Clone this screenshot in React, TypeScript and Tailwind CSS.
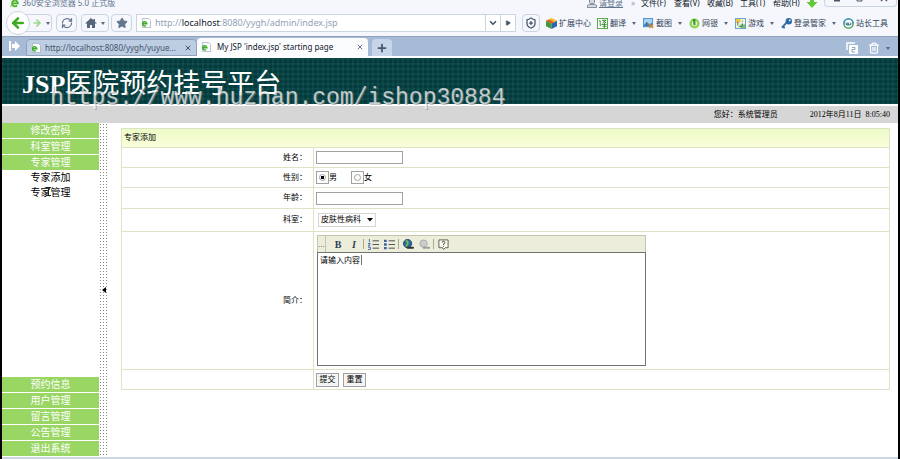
import { useState, type ReactNode } from "react";
import {
  ArrowLeft,
  ArrowRight,
  ChevronDown,
  Play,
  Plus,
  RefreshCw,
  ShieldPlus,
  Star,
  Trash2,
  X,
} from "lucide-react";

const MENUS = ["文件(F)", "查看(V)", "收藏(B)", "工具(T)", "帮助(H)"];
const TOP_MENU = ["修改密码", "科室管理", "专家管理"];
const SUB_MENU = ["专家添加", "专家管理"];
const BOTTOM_MENU = ["预约信息", "用户管理", "留言管理", "公告管理", "退出系统"];

export default function App() {
  return (
    <div className="flex min-h-screen flex-col overflow-hidden border-x-2 border-black bg-white font-['Liberation_Sans','Noto_Sans_CJK_SC',sans-serif] text-[8px] text-black">
      <BrowserChrome />
      <PageHeader />
      <div className="flex flex-1">
        <Sidebar />
        <main className="flex-1 pt-1 pr-2 pl-3">
          <ExpertForm />
        </main>
      </div>
      <div className="h-0.5 bg-slate-300" />
    </div>
  );
}

function BrowserChrome() {
  return (
    <header className="bg-[#f5f7fc] font-['Noto_Sans','Noto_Sans_CJK_SC',sans-serif]">
      <div className="flex h-1.5 items-center pl-2 text-slate-700">
        <BrowserMark />
        <span className="ml-0.5 text-[8px] whitespace-nowrap text-slate-500">
          360安全浏览器 5.0 正式版
        </span>
        <div className="ml-auto flex items-center whitespace-nowrap">
          <svg viewBox="0 0 12 12" className="mr-0.5 size-2.5" fill="#d5d9df" stroke="#6b7685">
            <path d="M3 .5h6v5L7.500 7h-3L3 5.500zM.5 11.500V9l3-1.500h5l3 1.500v2.500z" />
          </svg>
          <a href="#login" className="w-8 text-slate-500 underline">
            请登录
          </a>
          <span className="w-2.5 text-slate-400">»</span>
          {MENUS.map((m) => (
            <button key={m} className="w-[33px] text-left text-slate-900">
              {m}
            </button>
          ))}
          <svg viewBox="0 0 12 12" className="mr-1.5 size-3">
            <path d="M4 1h4v4h3.500L6 11 .5 5H4z" fill="#62c83c" />
          </svg>
        </div>
        <div className="-mt-1 mr-px flex h-3 w-[73px] items-end justify-around rounded-b border border-t-0 border-slate-300 pb-1">
          <svg viewBox="0 0 8 8" className="size-2" stroke="#4b5568" fill="none">
            <path d="M1 6.500h6" strokeWidth="2" />
          </svg>
          <svg viewBox="0 0 8 8" className="size-2" stroke="#4b5568" fill="none">
            <path d="M1 3h5v4H1zM3 3V1h5v4H6" />
          </svg>
          <svg viewBox="0 0 8 8" className="size-2" stroke="#4b5568" fill="none">
            <path d="m1 1 6 6M7 1 1 7" strokeWidth="1.400" />
          </svg>
        </div>
      </div>

      <div className="flex h-[30px] items-center pt-1 pr-2.5 pl-1">
        <button
          aria-label="后退"
          className="z-10 flex size-6 items-center justify-center rounded-full border border-slate-300 bg-white"
        >
          <ArrowLeft className="size-4 text-[#3dab22]" strokeWidth={4} />
        </button>
        <button
          aria-label="前进"
          className="-ml-2 flex h-[18px] w-[30px] items-center justify-center gap-1 rounded-r border border-slate-300 pl-2"
        >
          <ArrowRight className="size-2.5 shrink-0 text-[#9bd88c]" strokeWidth={4} />
          <Caret />
        </button>
        <ToolButton label="刷新" className="ml-1 w-[21px]">
          <RefreshCw className="size-3 text-slate-500" strokeWidth={2.5} />
        </ToolButton>
        <ToolButton label="主页" className="ml-1 w-7 gap-1">
          <svg viewBox="0 0 12 12" className="size-3" fill="#56657a">
            <path d="M6 1 0 6.500h2V11h3V8h2v3h3V6.500h2L10 4.700V2H8.500v1.300z" />
          </svg>
          <Caret />
        </ToolButton>
        <ToolButton label="收藏" className="ml-0.5 w-[21px]">
          <Star className="size-3 fill-slate-500 text-slate-500" />
        </ToolButton>
        <form
          className="ml-1 flex h-[18px] flex-1 items-center border border-slate-300 bg-white pl-1"
          onSubmit={(e) => e.preventDefault()}
        >
          <PageMark />
          <span className="ml-1 flex-1 text-[9px] whitespace-nowrap text-slate-400">
            http://<span className="text-slate-900">localhost</span>
            :8080/yygh/admin/index.jsp
          </span>
          <button
            aria-label="历史"
            className="flex h-full w-[15px] items-center justify-center border-l border-slate-300"
          >
            <ChevronDown className="size-2.5 text-slate-600" strokeWidth={4} />
          </button>
          <button
            aria-label="转到"
            className="flex h-full w-[15px] items-center justify-center border-l border-slate-300"
          >
            <Play className="size-1.5 fill-slate-600 text-slate-600" />
          </button>
        </form>
        <ToolButton label="安全" className="ml-1.5 w-[18px]">
          <ShieldPlus className="size-3 text-slate-600" strokeWidth={2.5} />
        </ToolButton>
        <nav className="ml-1.5 flex items-center text-slate-700">
          <Plugin label="扩展中心" className="w-[51px]">
            <path d="m6 0 6 3-6 3-6-3z" fill="#f3bb2b" />
            <path d="m0 3 6 3v6L0 9z" fill="#3e9b3c" />
            <path d="m12 3-6 3v6l6-3z" fill="#2b66ad" />
            <path d="m3 1.500 6 3-3 1.500-6-3z" fill="#d85b27" />
          </Plugin>
          <Plugin label="翻译" className="w-[46px]" menu>
            <rect x=".5" y=".5" width="11" height="11" fill="#fff" stroke="#4aa83c" />
            <path
              d="M2 3h1.500v5.500L5 7M5.500 2.500H10L6 5.500M6.500 2.500 10 5.500M5.500 7H10.500M8 5v6M6 9h4.500"
              stroke="#318a27"
              fill="none"
            />
          </Plugin>
          <Plugin label="截图" className="w-[46px]" menu>
            <rect x=".5" y=".5" width="10" height="9" fill="#a9d3f3" stroke="#4a8fca" />
            <path d="m1 8 3-4 3 3 3-2v4H1z" fill="#3a7bb9" />
            <path d="m6 6 5 5M11 7l-4 4" stroke="#dd8a2c" strokeWidth="1.500" />
          </Plugin>
          <Plugin label="网银" className="w-[46px]" menu>
            <circle cx="6" cy="6" r="5.500" fill="#8fd14b" />
            <circle cx="6" cy="6" r="3" fill="#e8f8d7" />
            <path d="M4 1h3v7H5z" fill="#3c9b31" />
          </Plugin>
          <Plugin label="游戏" className="w-[46px]" menu>
            <rect x=".5" y=".5" width="11" height="11" fill="#eef6d8" stroke="#5c9fcb" />
            <path d="M1 1h5v4H1z" fill="#f2c53d" />
            <path d="M6 7h5v4H6z" fill="#7dc254" />
            <path d="M3 4v4M8 3v1M8 6v2M4 9h4" stroke="#34608c" />
          </Plugin>
          <Plugin label="登录管家" className="w-[62px]" menu>
            <circle cx="8.500" cy="3.500" r="3.500" fill="#2d6aa8" />
            <circle cx="9.500" cy="2.500" r="1" fill="#fff" />
            <path d="m6 5-5 5.500M2 9l2 2" stroke="#2d6aa8" strokeWidth="2" />
          </Plugin>
          <Plugin label="站长工具">
            <circle cx="6" cy="6" r="5" fill="#fff" stroke="#37a04a" strokeWidth="1.500" />
            <path d="M1 6a5 5 0 0 1 10 0" stroke="#3a8fd0" strokeWidth="1.500" fill="none" />
            <path d="M3.500 5v2.500h2V5v2.500h3V5" stroke="#245c86" fill="none" />
          </Plugin>
        </nav>
      </div>

      <div className="flex h-5 items-end border-t border-slate-400 bg-[#a5bbd6]">
        <svg viewBox="0 0 12 12" className="mb-1 ml-1.5 size-3" fill="#fff">
          <path d="M1 1h2v10H1zM4 4h3V1l5 5-5 5V8H4z" />
        </svg>
        <div className="ml-1.5 flex h-[17px] w-[171px] items-center rounded-t border border-slate-400 bg-[#bdcde2] px-1 text-slate-600">
          <PageMark />
          <span className="ml-1 flex-1 text-[8px] whitespace-nowrap">
            http://localhost:8080/yygh/yuyue...
          </span>
          <X className="size-2" strokeWidth={3} />
        </div>
        <div className="flex h-[18px] w-[171px] items-center rounded-t bg-[#fbfcfe] px-1 text-slate-900">
          <PageMark />
          <span className="ml-1.5 flex-1 text-[8px] whitespace-nowrap">
            My JSP 'index.jsp' starting page
          </span>
          <X className="size-2 text-slate-500" strokeWidth={3} />
        </div>
        <button
          aria-label="新标签页"
          className="ml-1 flex h-[17px] w-5 items-center justify-center rounded-t bg-[#c6d5e8]"
        >
          <Plus className="size-3 text-slate-600" strokeWidth={3.5} />
        </button>
        <div className="mr-2 mb-0.5 ml-auto flex items-center gap-2.5 text-white">
          <svg viewBox="0 0 12 12" className="size-3">
            <path d="M1 8V1h8" fill="none" stroke="#fff" strokeWidth="1.500" />
            <rect x="3" y="3" width="9" height="9" rx="1" fill="#fff" />
            <path d="M6 5.500h3v2H6v2.500h3" fill="none" stroke="#8aa4c4" />
          </svg>
          <div className="flex items-center gap-1.5">
            <Trash2 className="size-3" strokeWidth={2.5} />
            <Caret />
          </div>
        </div>
      </div>
      <div className="h-0.5 bg-white" />
    </header>
  );
}

function ToolButton({
  label,
  className,
  children,
}: {
  label: string;
  className: string;
  children: ReactNode;
}) {
  return (
    <button
      aria-label={label}
      className={`flex h-[18px] items-center justify-center rounded-sm border border-slate-300 ${className}`}
    >
      {children}
    </button>
  );
}

function Plugin({
  label,
  className = "",
  menu = false,
  children,
}: {
  label: string;
  className?: string;
  menu?: boolean;
  children: ReactNode;
}) {
  return (
    <button className={`flex items-center whitespace-nowrap ${className}`}>
      <svg viewBox="0 0 12 12" className="mr-0.5 size-[11px] shrink-0">
        {children}
      </svg>
      {label}
      {menu && (
        <span className="ml-1.5">
          <Caret />
        </span>
      )}
    </button>
  );
}

function Caret() {
  return (
    <svg viewBox="0 0 4 3" className="h-[3px] w-1 shrink-0" fill="#5b677a">
      <path d="M0 0h4L2 3z" />
    </svg>
  );
}

function BrowserMark() {
  return (
    <svg viewBox="0 0 12 12" className="size-2.5 shrink-0" fill="none">
      <path d="M2.500 6.500h7A3.500 3.500 0 1 0 8.500 9" stroke="#45b52c" strokeWidth="2.200" />
      <path d="M1 11C0 8 8 0 11 1" stroke="#8bcf3a" strokeWidth="1.200" />
    </svg>
  );
}

function PageMark() {
  return (
    <svg viewBox="0 0 12 12" className="size-2.5 shrink-0" fill="none">
      <path d="M2 .5h7l2.500 2.500v8.500H2z" fill="#fff" stroke="#9fb0bd" />
      <path d="M2 7h5A2.500 2.500 0 1 0 6 9" stroke="#3fae2a" strokeWidth="1.800" />
    </svg>
  );
}

function PageHeader() {
  return (
    <div className="relative">
      <div className="h-[46px] bg-[#033a3b] bg-[linear-gradient(#3c808026_2px,transparent_2px),linear-gradient(90deg,#3c808026_2px,transparent_2px)] bg-[size:5px_5px] pl-5">
        <h1 className="pt-1.5 font-['Liberation_Serif','Noto_Sans_CJK_SC',serif] text-[27px] leading-10 font-normal whitespace-nowrap text-white">
          <b className="text-[26px] font-bold">JSP</b>
          医院预约挂号平台
        </h1>
      </div>
      <div className="mt-0.5 flex h-[17px] items-center justify-end gap-8 bg-[#d6d6d6] pr-2 whitespace-nowrap">
        <span className="text-[8px]">您好：系统管理员</span>
        <span className="font-['Liberation_Serif','Noto_Sans_CJK_SC',serif] text-[8px]">
          2012年8月11日&nbsp; 8:05:40
        </span>
      </div>
      {/* site watermark */}
      <span className="pointer-events-none absolute top-6 left-12 font-['Liberation_Mono',monospace] text-[23px] leading-8 whitespace-nowrap text-white/70 [text-shadow:1px_1px_0_#8888]">
        https://www.huzhan.com/ishop30884
      </span>
    </div>
  );
}

function Sidebar() {
  return (
    <>
      <nav className="flex w-[97px] flex-col text-[10px]">
        <MenuGroup items={TOP_MENU} />
        <div className="relative flex flex-col">
          {SUB_MENU.map((s) => (
            <a key={s} href="#expert" className="h-[15px] text-center leading-[14px]">
              {s}
            </a>
          ))}
          {/* text cursor resting on the second entry */}
          <svg viewBox="0 0 5 9" className="absolute top-4 left-11 h-[9px] w-[5px]" stroke="#222" fill="none">
            <path d="M0 .5h5M2.500 0v9M0 8.500h5" />
          </svg>
        </div>
        <div className="mt-auto">
          <MenuGroup items={BOTTOM_MENU} />
        </div>
      </nav>
      <button
        aria-label="收起菜单"
        className="flex w-2.5 items-center justify-center bg-[radial-gradient(circle,#888_1px,transparent_1px)] bg-[size:3px_3px]"
      >
        <svg viewBox="0 0 4 6" className="h-1.5 w-1">
          <path d="M4 0v6L0 3z" />
        </svg>
      </button>
    </>
  );
}

function MenuGroup({ items }: { items: string[] }) {
  return (
    <div className="flex flex-col">
      {items.map((item) => (
        <button
          key={item}
          className="h-4 border-b border-white bg-[#99d664] leading-[15px] text-white"
        >
          {item}
        </button>
      ))}
    </div>
  );
}

function ExpertForm() {
  const [sex, setSex] = useState("男");
  return (
    <form onSubmit={(e) => e.preventDefault()}>
      <table className="mt-px w-full border-collapse border border-[#dfe3c5]">
        <thead>
          <tr className="h-[19px] bg-linear-to-b from-[#ecfbc8] to-[#fbfedb]">
            <th colSpan={2} className="border border-[#dfe3c5] px-0.5 text-left font-normal">
              专家添加
            </th>
          </tr>
        </thead>
        <tbody>
          <Row label="姓名：" htmlFor="name" className="h-5">
            <input id="name" className="block h-[13px] w-[87px] border border-neutral-400 px-0.5" />
          </Row>
          <Row label="性别：" className="h-5">
            <div className="flex items-center">
              {["男", "女"].map((s) => (
                <label key={s} className="flex w-[35px] items-center">
                  <span className="flex size-[13px] items-center justify-center border border-neutral-400">
                    <input
                      type="radio"
                      name="sex"
                      checked={sex === s}
                      onChange={() => setSex(s)}
                      className="size-[7px] appearance-none rounded-full border border-neutral-400 checked:bg-[radial-gradient(circle,#000_2px,transparent_2px)]"
                    />
                  </span>
                  {s}
                </label>
              ))}
            </div>
          </Row>
          <Row label="年龄：" htmlFor="age" className="h-[21px]">
            <input id="age" className="block h-[13px] w-[87px] border border-neutral-400 px-0.5" />
          </Row>
          <Row label="科室：" htmlFor="dept" className="h-[23px]">
            <div className="relative ml-0.5 w-[58px]">
              <select
                id="dept"
                className="block h-3.5 w-full appearance-none border border-neutral-300 bg-white pl-0.5 leading-3"
              >
                <option>皮肤性病科</option>
              </select>
              <svg viewBox="0 0 6 4" className="pointer-events-none absolute top-[5px] right-[3px] h-1 w-1.5">
                <path d="M0 0h6L3 3.500z" />
              </svg>
            </div>
          </Row>
          <Row label="简介：" htmlFor="intro" className="h-[138px]">
            <Editor />
          </Row>
          <Row label="" className="h-5">
            <div className="flex gap-1">
              <FormButton type="submit">提交</FormButton>
              <FormButton type="reset">重置</FormButton>
            </div>
          </Row>
        </tbody>
      </table>
    </form>
  );
}

function Row({
  label,
  htmlFor,
  className,
  children,
}: {
  label: string;
  htmlFor?: string;
  className: string;
  children: ReactNode;
}) {
  return (
    <tr className={className}>
      <td className="w-1/4 border border-[#dfe3c5] pr-1.5 text-right">
        <label htmlFor={htmlFor}>{label}</label>
      </td>
      <td className="border border-[#dfe3c5] pl-0.5">{children}</td>
    </tr>
  );
}

function FormButton({ type, children }: { type: "submit" | "reset"; children: ReactNode }) {
  return (
    <button type={type} className="h-3.5 w-[23px] border border-neutral-400 bg-neutral-100 leading-3">
      {children}
    </button>
  );
}

function Editor() {
  return (
    <div className="relative ml-px w-[329px] max-w-full">
      <div className="flex h-[17px] items-center border border-b-0 border-[#c5c5ab] bg-[#ecedda] text-slate-700">
        <span className="h-full w-2 border-r border-[#c5c5ab] pt-1 leading-[10px]">...</span>
        <button
          type="button"
          className="ml-1 w-4 text-center font-['Liberation_Serif',serif] text-[10px] font-bold"
        >
          B
        </button>
        <button
          type="button"
          className="w-4 text-center font-['Liberation_Serif',serif] text-[10px] font-bold italic"
        >
          I
        </button>
        <Divider />
        <EditorIcon label="编号列表">
          <path d="M5 2h7M5 6h7M5 10h7" stroke="#444" />
          <path d="M1.500 0v3.500M0 5h2.500L0 7.500h2.500M0 9h2.500v2.500H0" stroke="#3c63a8" />
        </EditorIcon>
        <EditorIcon label="项目列表">
          <path d="M5 2h7M5 6h7M5 10h7" stroke="#444" />
          <path d="M0 2h3M0 6h3M0 10h3" stroke="#3c63a8" strokeWidth="2.500" />
        </EditorIcon>
        <Divider />
        <EditorIcon label="插入链接">
          <circle cx="5" cy="5" r="4.500" fill="#2c6c9c" stroke="#1c4566" />
          <path d="M3 2q3 0 2 3T3 8" stroke="#74b95b" strokeWidth="2" />
          <path d="M5 9.500h2.500M8.500 9.500H11" stroke="#333" strokeWidth="2" strokeLinecap="round" />
        </EditorIcon>
        <EditorIcon label="取消链接">
          <circle cx="5" cy="5" r="4" fill="#ccc" stroke="#aaa" />
          <path d="M5 9.500h2M9 9.500h2" stroke="#999" strokeWidth="2" strokeLinecap="round" />
        </EditorIcon>
        <Divider />
        <EditorIcon label="帮助">
          <path d="M1 1h10v8.500H8l-2 2-1-2H1z" fill="#fffff0" stroke="#555" />
          <path d="M4.500 4q0-1.500 1.500-1.500T7.500 4 6 5.500v1M6 7.500v1" stroke="#333" />
        </EditorIcon>
      </div>
      <textarea
        id="intro"
        defaultValue="请输入内容"
        className="block h-[114px] w-full resize-none border border-neutral-500 bg-white px-0.5 py-0.5 leading-3 outline-none"
      />
      <span className="pointer-events-none absolute top-5 left-11 h-2.5 w-px bg-neutral-500" />
    </div>
  );
}

function Divider() {
  return <span className="mx-px h-2.5 w-px bg-[#aaa98d]" />;
}

function EditorIcon({ label, children }: { label: string; children: ReactNode }) {
  return (
    <button type="button" aria-label={label} className="flex w-4 justify-center">
      <svg viewBox="0 0 12 12" className="size-[11px]" fill="none">
        {children}
      </svg>
    </button>
  );
}
